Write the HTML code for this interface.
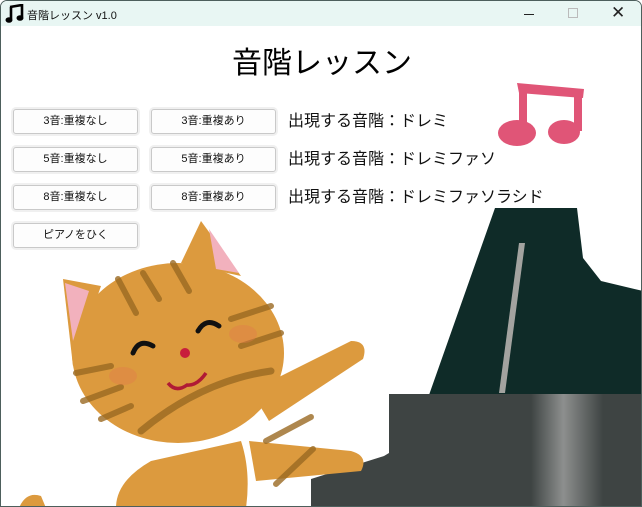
<!DOCTYPE html>
<html><head><meta charset="utf-8"><style>
*{margin:0;padding:0;box-sizing:border-box}
body{width:642px;height:507px;overflow:hidden;background:#fff;font-family:"Liberation Sans","Noto Sans CJK JP",sans-serif;position:relative}
.win{position:absolute;inset:0;border:1px solid #4d5f5c;border-radius:7px 7px 0 0;overflow:hidden;background:#fff}
.tb{position:absolute;left:0;top:0;width:100%;height:25px;background:#e8f6f3}
.tt{position:absolute;left:26px;top:6px;font-size:11px;color:#111}
.btn{position:absolute;width:125px;height:25px;background:#fdfdfd;border:1px solid #c9c9c9;border-radius:3px;font-size:11px;text-align:center;line-height:23px;color:#111;box-shadow:0 0 0 2px #f0f0f0}
.lbl{position:absolute;left:287px;font-size:16px;color:#111;background:#fff;padding-right:4px}
h1{position:absolute;left:0;width:642px;top:37px;text-align:center;font-weight:normal;font-size:30px;color:#000}
svg{position:absolute;left:0;top:0}
</style></head><body><div class="win">
<svg width="642" height="507" viewBox="0 0 642 507">
<polygon points="494,207 576,207 582,257 600,280 642,290 642,394 428,394" fill="#0f2b28"/>
<polygon points="518,242 524,242 504,392 498,392" fill="#a3a3a0"/>
<polygon points="388,393 642,393 642,507 310,507 310,478 383,455 388,452" fill="#3e4443"/>
<defs><linearGradient id="hl" x1="0" x2="1"><stop offset="0" stop-color="#3e4443"/><stop offset=".45" stop-color="#8d8f8e"/><stop offset="1" stop-color="#3e4443"/></linearGradient></defs>
<rect x="530" y="393" width="72" height="114" fill="url(#hl)"/>
<g fill="#dc9a3e">
<path d="M150,460 Q115,480 115,507 L245,507 Q250,470 240,440 Z"/>
<path d="M250,390 L350,340 Q368,340 362,358 L268,420 Z"/>
<path d="M248,440 L350,450 Q368,455 360,470 L255,480 Z"/>
<polygon points="180,262 200,220 240,275"/>
<polygon points="62,278 100,285 72,365"/>
<ellipse cx="177" cy="352" rx="106" ry="90"/>
<path d="M18,507 Q25,490 40,495 L45,507 Z"/>
</g>
<polygon points="208,228 238,272 215,268" fill="#f2b1bd"/>
<polygon points="64,282 88,290 72,340" fill="#f2b1bd"/>
<g stroke="#9a6a22" stroke-width="6" stroke-linecap="round" fill="none" opacity=".8">
<line x1="117" y1="278" x2="135" y2="312"/><line x1="142" y1="272" x2="158" y2="298"/><line x1="172" y1="262" x2="188" y2="290"/>
<line x1="230" y1="318" x2="270" y2="305"/><line x1="240" y1="345" x2="280" y2="332"/>
<line x1="75" y1="372" x2="110" y2="365"/><line x1="82" y1="400" x2="120" y2="386"/><line x1="100" y1="418" x2="130" y2="405"/>
<path d="M140,430 Q200,380 270,370" stroke-width="7"/>
<line x1="265" y1="440" x2="310" y2="416"/>
<line x1="275" y1="483" x2="312" y2="448"/>
</g>
<g stroke="#111" stroke-width="5" fill="none" stroke-linecap="round">
<path d="M132,352 Q138,337 152,345"/><path d="M197,330 Q205,316 218,325"/>
</g>
<circle cx="184" cy="352" r="5" fill="#c81e3c"/>
<path d="M167,382 Q175,392 186,384 Q196,385 205,372" stroke="#b01a35" stroke-width="3.5" fill="none"/>
<ellipse cx="122" cy="375" rx="14" ry="9" fill="#e07a4a" opacity=".4"/>
<ellipse cx="242" cy="333" rx="14" ry="9" fill="#e07a4a" opacity=".4"/>
</svg>
<div class="tb">
<svg width="20" height="20" style="left:4px;top:3px" viewBox="0 0 20 20"><path d="M5,3 L17,1 L17,13" stroke="#000" stroke-width="2.6" fill="none"/><line x1="6" y1="3" x2="6" y2="15" stroke="#000" stroke-width="2.6"/><ellipse cx="4" cy="16" rx="3.5" ry="2.8" fill="#000"/><ellipse cx="15" cy="14" rx="3.5" ry="2.8" fill="#000"/></svg>
<div class="tt">音階レッスン v1.0</div>
<div style="position:absolute;left:523px;top:13px;width:10px;height:1px;background:#222"></div>
<div style="position:absolute;left:567px;top:7px;width:10px;height:10px;border:1px solid #bbb"></div>
<div style="position:absolute;left:610px;top:2px;font-size:17px;color:#222">✕</div>
</div>
<h1>音階レッスン</h1>
<div class="btn" style="left:12px;top:108px">3音:重複なし</div>
<div class="btn" style="left:150px;top:108px">3音:重複あり</div>
<div class="btn" style="left:12px;top:146px">5音:重複なし</div>
<div class="btn" style="left:150px;top:146px">5音:重複あり</div>
<div class="btn" style="left:12px;top:184px">8音:重複なし</div>
<div class="btn" style="left:150px;top:184px">8音:重複あり</div>
<div class="btn" style="left:12px;top:222px">ピアノをひく</div>
<div class="lbl" style="top:106px">出現する音階：ドレミ</div>
<div class="lbl" style="top:144px">出現する音階：ドレミファソ</div>
<div class="lbl" style="top:182px">出現する音階：ドレミファソラシド</div>
<svg width="642" height="507" viewBox="0 0 642 507" style="pointer-events:none">
<g fill="#e05577">
<polygon points="516,82 583,88 582,97 518,92"/>
<rect x="518" y="84" width="8" height="45"/>
<rect x="573" y="88" width="8" height="42"/>
<ellipse cx="516" cy="132" rx="19" ry="13"/>
<ellipse cx="563" cy="131" rx="16" ry="12"/>
</g>
</svg>
</div></body></html>
